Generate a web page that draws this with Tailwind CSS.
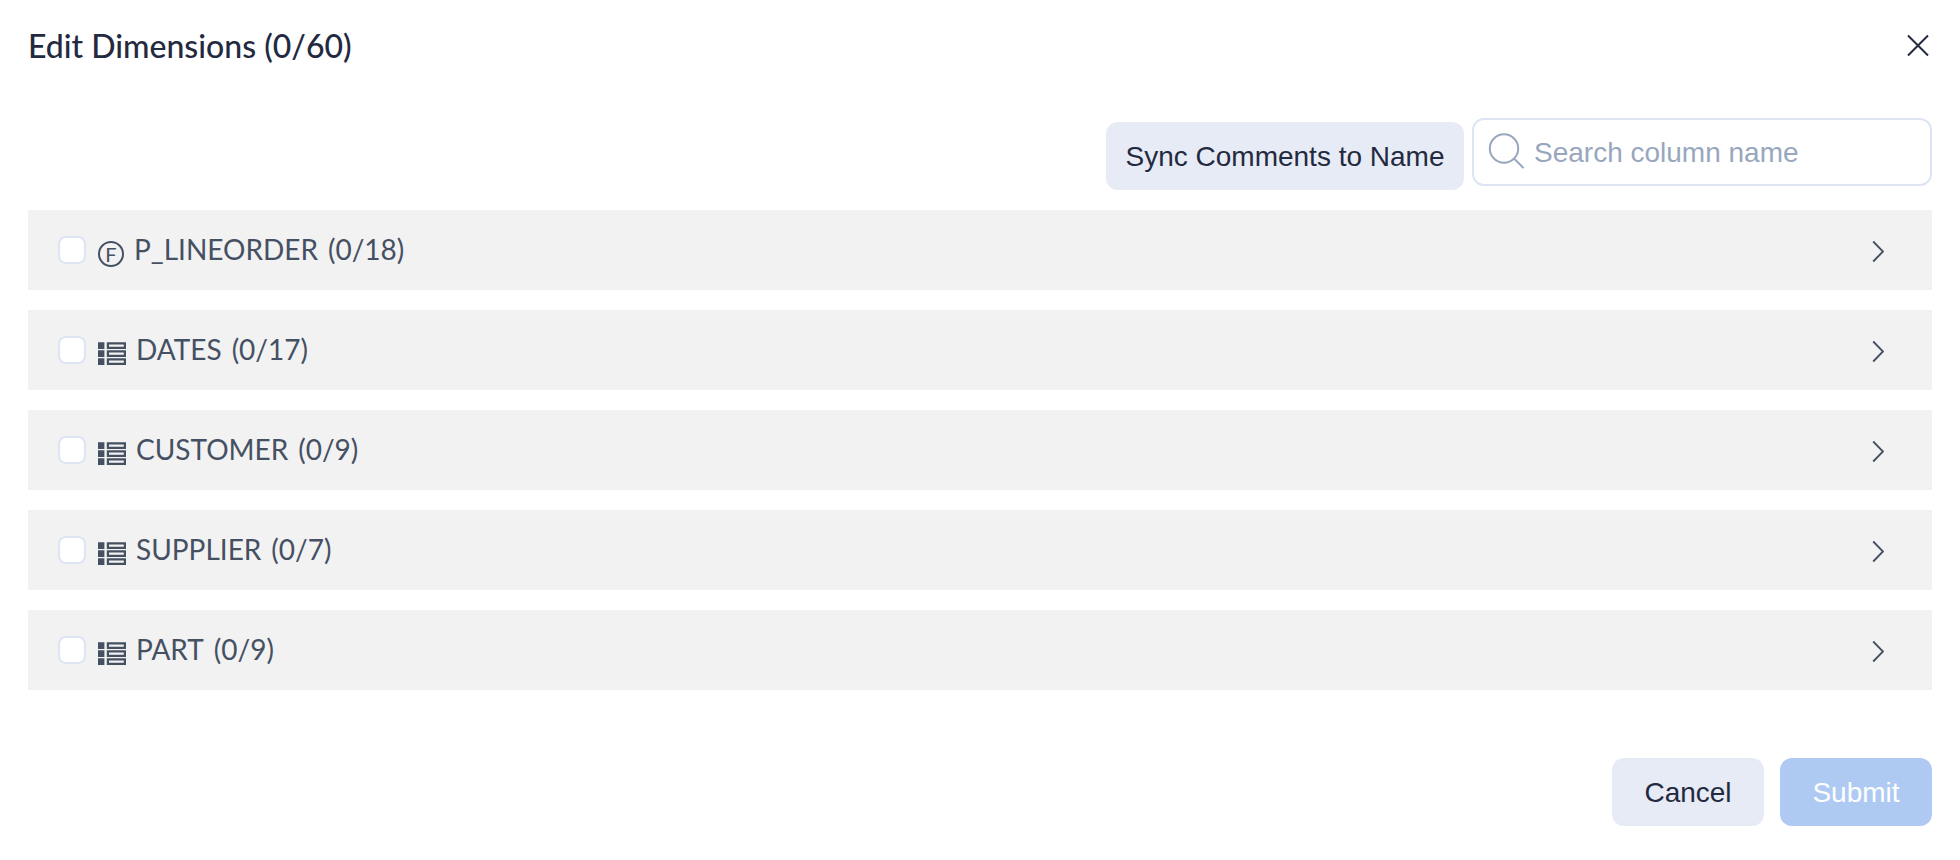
<!DOCTYPE html>
<html lang="en">
<head>
<meta charset="utf-8">
<title>Edit Dimensions</title>
<script src="https://cdn.jsdelivr.net/npm/@tailwindcss/browser@4"></script>
</head>
<body class="bg-white font-['Liberation_Sans',sans-serif] text-[28px] text-[#232a3f]">
<svg class="hidden" aria-hidden="true">
  <symbol id="table" viewBox="0 0 28 24">
    <path fill="currentColor" d="M0 .2h6.4V7H0zM0 8.2h6.4V15H0zM0 16.2h6.4V23H0z"/>
    <path fill="none" stroke="currentColor" stroke-width="2.2" d="M9.9 1.3h17V5.9h-17zM9.9 9.3h17v4.6h-17zM9.9 17.3h17v4.6h-17z"/>
  </symbol>
  <symbol id="chevron" viewBox="0 0 12 24">
    <path fill="none" stroke="currentColor" stroke-width="1.9" d="M1.2 1.5 11 11.5 1.2 21.5"/>
  </symbol>
</svg>
<main class="px-7 pb-8">
  <header class="flex h-[92px] items-center justify-between">
    <h1 class="font-['Lato',sans-serif] text-[32px] leading-10 font-medium">Edit Dimensions (0/60)</h1>
    <button type="button" aria-label="Close" class="mr-1">
      <svg class="size-5 overflow-visible" viewBox="0 0 20 20" fill="none" stroke="currentColor" stroke-width="2"><path d="M0-.5 20 19.5M20-.5 0 19.5"/></svg>
    </button>
  </header>
  <div class="flex items-start justify-end gap-2 pt-[26px] pb-5">
    <button type="button" class="mt-1 h-[68px] w-[358px] rounded-xl bg-[#e7ebf6] pt-[2px] whitespace-nowrap">Sync Comments to Name</button>
    <label class="flex h-[68px] w-[460px] items-center gap-2 rounded-xl border-2 border-[#dde5f4] pr-4 pl-[14px]">
      <svg class="size-[38px] shrink-0 text-[#98a7be]" viewBox="0 0 38 38" fill="none" stroke="currentColor" stroke-width="2" stroke-linecap="round"><circle cx="16" cy="15.5" r="14.2"/><path d="m26.5 26 8.5 8.5"/></svg>
      <input type="text" aria-label="Search column name" placeholder="Search column name" class="min-w-0 flex-1 pt-[2px] outline-none placeholder:text-[#98a7be]">
    </label>
  </div>
  <ul class="flex flex-col gap-5 font-['Lato',sans-serif] leading-10 text-[#455063]">
    <li class="flex h-20 items-center bg-[#f2f2f2] pr-12 pl-[30px]">
      <input id="lineorder" type="checkbox" class="size-7 shrink-0 appearance-none rounded-lg border-2 border-[#dde5f4] bg-white checked:bg-[#0988de]">
      <label for="lineorder" class="flex items-center gap-[10px] pl-3">
        <span class="mt-2 flex size-[26px] items-center justify-center rounded-full border-2 border-[#455063] text-[20px] leading-5">F</span>
        <span class="flex gap-[10px] pb-[2px]"><span>P_LINEORDER</span><span>(0/18)</span></span>
      </label>
      <button type="button" aria-label="Expand P_LINEORDER" class="mt-1 ml-auto"><svg class="h-6 w-3"><use href="#chevron"/></svg></button>
    </li>
    <li class="flex h-20 items-center bg-[#f2f2f2] pr-12 pl-[30px]">
      <input id="dates" type="checkbox" class="size-7 shrink-0 appearance-none rounded-lg border-2 border-[#dde5f4] bg-white checked:bg-[#0988de]">
      <label for="dates" class="flex items-center gap-[10px] pl-3">
        <svg class="mt-2 h-6 w-7"><use href="#table"/></svg>
        <span class="flex gap-[10px] pb-[2px]"><span>DATES</span><span>(0/17)</span></span>
      </label>
      <button type="button" aria-label="Expand DATES" class="mt-1 ml-auto"><svg class="h-6 w-3"><use href="#chevron"/></svg></button>
    </li>
    <li class="flex h-20 items-center bg-[#f2f2f2] pr-12 pl-[30px]">
      <input id="customer" type="checkbox" class="size-7 shrink-0 appearance-none rounded-lg border-2 border-[#dde5f4] bg-white checked:bg-[#0988de]">
      <label for="customer" class="flex items-center gap-[10px] pl-3">
        <svg class="mt-2 h-6 w-7"><use href="#table"/></svg>
        <span class="flex gap-[10px] pb-[2px]"><span>CUSTOMER</span><span>(0/9)</span></span>
      </label>
      <button type="button" aria-label="Expand CUSTOMER" class="mt-1 ml-auto"><svg class="h-6 w-3"><use href="#chevron"/></svg></button>
    </li>
    <li class="flex h-20 items-center bg-[#f2f2f2] pr-12 pl-[30px]">
      <input id="supplier" type="checkbox" class="size-7 shrink-0 appearance-none rounded-lg border-2 border-[#dde5f4] bg-white checked:bg-[#0988de]">
      <label for="supplier" class="flex items-center gap-[10px] pl-3">
        <svg class="mt-2 h-6 w-7"><use href="#table"/></svg>
        <span class="flex gap-[10px] pb-[2px]"><span>SUPPLIER</span><span>(0/7)</span></span>
      </label>
      <button type="button" aria-label="Expand SUPPLIER" class="mt-1 ml-auto"><svg class="h-6 w-3"><use href="#chevron"/></svg></button>
    </li>
    <li class="flex h-20 items-center bg-[#f2f2f2] pr-12 pl-[30px]">
      <input id="part" type="checkbox" class="size-7 shrink-0 appearance-none rounded-lg border-2 border-[#dde5f4] bg-white checked:bg-[#0988de]">
      <label for="part" class="flex items-center gap-[10px] pl-3">
        <svg class="mt-2 h-6 w-7"><use href="#table"/></svg>
        <span class="flex gap-[10px] pb-[2px]"><span>PART</span><span>(0/9)</span></span>
      </label>
      <button type="button" aria-label="Expand PART" class="mt-1 ml-auto"><svg class="h-6 w-3"><use href="#chevron"/></svg></button>
    </li>
  </ul>
  <footer class="flex justify-end gap-4 pt-[68px]">
    <button type="button" class="h-[68px] w-[152px] rounded-xl bg-[#e7ebf6] pt-[2px]">Cancel</button>
    <button type="submit" disabled class="h-[68px] w-[152px] rounded-xl bg-[#aecaf2] pt-[2px] text-white">Submit</button>
  </footer>
</main>
</body>
</html>
